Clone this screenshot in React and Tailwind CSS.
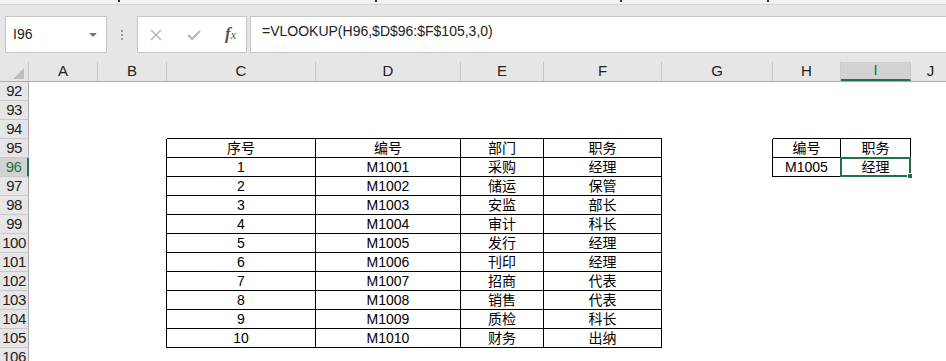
import React from 'react';

const colWidths = [29, 69, 69, 149, 145, 83, 118, 111, 68, 70, 40];
const colNames = ['', 'A', 'B', 'C', 'D', 'E', 'F', 'G', 'H', 'I', 'J'];

const staff = [
  ['1', 'M1001', '采购', '经理'],
  ['2', 'M1002', '储运', '保管'],
  ['3', 'M1003', '安监', '部长'],
  ['4', 'M1004', '审计', '科长'],
  ['5', 'M1005', '发行', '经理'],
  ['6', 'M1006', '刊印', '经理'],
  ['7', 'M1007', '招商', '代表'],
  ['8', 'M1008', '销售', '代表'],
  ['9', 'M1009', '质检', '科长'],
  ['10', 'M1010', '财务', '出纳'],
];

// cell values keyed by "row:col"
const cells = {};
['序号', '编号', '部门', '职务'].forEach((v, i) => (cells[`95:${i + 3}`] = v));
staff.forEach((r, ri) => r.forEach((v, i) => (cells[`${96 + ri}:${i + 3}`] = v)));
cells['95:8'] = '编号';
cells['95:9'] = '职务';
cells['96:8'] = 'M1005';
cells['96:9'] = '经理';

const inTable = (r, c) =>
  (r >= 95 && r <= 105 && c >= 3 && c <= 6) || (r >= 95 && r <= 96 && c >= 8 && c <= 9);

const rows = [];
for (let r = 92; r <= 106; r++) rows.push(r);

const font = { fontFamily: '"Liberation Sans", "Noto Sans CJK SC", sans-serif' };

const App = () => {
  return (
    <div className="w-[946px] h-[361px] overflow-hidden bg-white relative" style={font}>
      {/* ribbon remnant */}
      <div className="h-[5px] bg-[#f3f3f3] border-b border-[#d4d4d4] relative">
        {[118, 375, 620, 767].map(x => (
          <div key={x} className="absolute top-0 w-[2px] h-[2px] bg-[#333]" style={{ left: x }} />
        ))}
      </div>

      {/* formula bar */}
      <div className="h-[57px] bg-[#e6e6e6] flex items-start pt-[11px] pl-[5px]">
        <div className="w-[102px] h-[37px] bg-white border border-[#c6c6c6] flex items-center justify-between pl-[7px] pr-[9px]">
          <span className="text-[14px] text-[#222]">I96</span>
          <span className="w-0 h-0 border-l-[4px] border-r-[4px] border-t-[4px] border-l-transparent border-r-transparent border-t-[#777]" />
        </div>
        <div className="w-[30px] h-[37px] flex flex-col items-center justify-center gap-[2px]">
          <span className="w-[2px] h-[2px] bg-[#999]" />
          <span className="w-[2px] h-[2px] bg-[#999]" />
          <span className="w-[2px] h-[2px] bg-[#999]" />
        </div>
        <div className="w-[110px] h-[37px] bg-white border border-[#c6c6c6] flex items-center justify-between pl-[11px] pr-[10px]">
          <svg width="14" height="14" viewBox="0 0 14 14">
            <path d="M2 2 L12 12 M12 2 L2 12" stroke="#b4b4b4" strokeWidth="1.4" />
          </svg>
          <svg width="16" height="14" viewBox="0 0 16 14">
            <path d="M2 7 L6 11 L14 3" stroke="#b4b4b4" strokeWidth="2" fill="none" />
          </svg>
          <span className="text-[17px] italic font-bold text-[#555] pb-[3px] leading-none" style={{ fontFamily: '"Liberation Serif", serif' }}>
            f<span className="text-[12px] font-normal">x</span>
          </span>
        </div>
        <div className="ml-[3px] flex-1 h-[37px] bg-white border border-[#c6c6c6] border-r-0 flex items-center pl-[11px] pb-[6px]">
          <span className="text-[14px] text-[#222]">=VLOOKUP(H96,$D$96:$F$105,3,0)</span>
        </div>
      </div>

      {/* column headers */}
      <div className="flex h-[20px] bg-[#e6e6e6] border-b border-[#ababab]">
        {colWidths.map((w, i) => (
          <div
            key={i}
            className={`shrink-0 flex items-center justify-center text-[15px] border-r border-[#c8c8c8] ${
              i === 9 ? 'bg-[#d2d2d2] text-[#217346] border-b-2 border-b-[#217346]' : 'text-[#222]'
            }`}
            style={{ width: w }}
          >
            {i === 0 ? (
              <svg width="28" height="19" viewBox="0 0 28 19">
                <path d="M24 6 L24 17 L13 17 Z" fill="#bdbdbd" />
              </svg>
            ) : (
              colNames[i]
            )}
          </div>
        ))}
      </div>

      {/* sheet rows */}
      {rows.map(r => (
        <div key={r} className="flex h-[19px]">
          {colWidths.map((w, c) => {
            if (c === 0) {
              return (
                <div
                  key={c}
                  className={`shrink-0 flex items-center justify-center text-[15px] tracking-[-0.5px] border-b border-[#c8c8c8] ${
                    r === 96
                      ? 'bg-[#d2d2d2] text-[#217346] border-r-2 border-r-[#217346]'
                      : 'bg-[#e6e6e6] text-[#222] border-r border-r-[#ababab]'
                  }`}
                  style={{ width: w }}
                >
                  {r}
                </div>
              );
            }
            const right = inTable(r, c) || inTable(r, c + 1);
            const bottom = inTable(r, c) || inTable(r + 1, c);
            return (
              <div
                key={c}
                className={`shrink-0 flex items-center justify-center text-[14px] text-black ${
                  right ? 'border-r border-r-black' : ''
                } ${bottom ? 'border-b border-b-black' : ''}`}
                style={{ width: w }}
              >
                {cells[`${r}:${c}`]}
              </div>
            );
          })}
        </div>
      ))}

      {/* active cell I96 */}
      <div className="absolute left-[840px] top-[157px] w-[71px] h-[20px] border-2 border-[#217346] pointer-events-none">
        <div className="absolute -right-[4px] -bottom-[4px] w-[6px] h-[6px] bg-[#217346] border border-white" />
      </div>
    </div>
  );
};

export default App;
